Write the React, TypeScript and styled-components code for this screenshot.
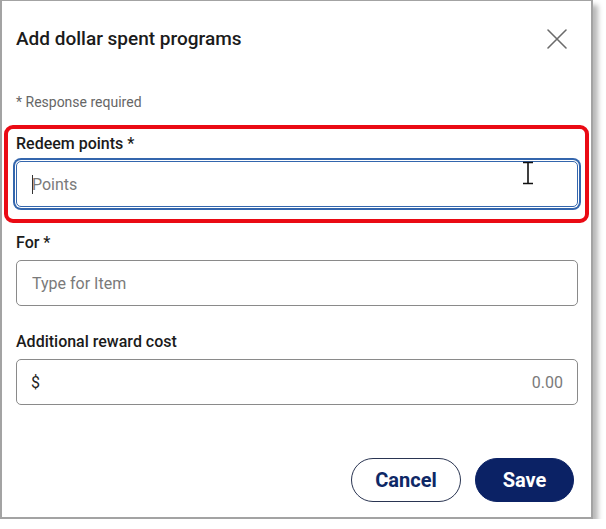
import React from "react";
import styled, { createGlobalStyle } from "styled-components";

const GlobalStyle = createGlobalStyle`
  html, body {
    margin: 0;
    padding: 0;
    background: #ffffff;
  }
  body {
    font-family: Roboto, "Liberation Sans", Arial, sans-serif;
    color: #1b1b1b;
  }
  * { box-sizing: border-box; }
`;

const Frame = styled.div`
  width: 593px;
  height: 519px;
  border: 2px solid #a3a3a3;
  border-top-width: 1px;
  background: #ffffff;
  box-shadow: 5px 5px 5px rgba(0, 0, 0, 0.28);
  display: flex;
  flex-direction: column;
`;

const Header = styled.div`
  display: flex;
  align-items: center;
  justify-content: space-between;
  padding: 26px 23px 0 14px;
  height: 50px;
`;

const Title = styled.h2`
  margin: 0;
  font-size: 19px;
  font-weight: 500;
  line-height: 24px;
  color: #1b1b1b;
`;

const CloseButton = styled.button`
  width: 22px;
  height: 22px;
  padding: 0;
  border: none;
  background: transparent;
  display: flex;
  align-items: center;
  justify-content: center;
  color: #6b6b6b;
  cursor: pointer;
`;

const Body = styled.div`
  display: flex;
  flex-direction: column;
  padding: 41px 13px 0 14px;
`;

const Note = styled.div`
  font-size: 14px;
  line-height: 20px;
  color: #666666;
  margin-bottom: 22px;
`;

const Field = styled.div<{ $highlight?: boolean }>`
  position: relative;
  display: flex;
  flex-direction: column;
  gap: 7px;
  margin-bottom: 26px;

  ${({ $highlight }) =>
    $highlight &&
    `
    &::before {
      content: "";
      position: absolute;
      left: -12px;
      right: -11px;
      top: -9px;
      bottom: -16px;
      border: 4px solid #ea0a14;
      border-radius: 9px;
      pointer-events: none;
    }
  `}
`;

const Label = styled.label`
  font-size: 16px;
  font-weight: 500;
  line-height: 20px;
  color: #1b1b1b;
`;

const InputShell = styled.div<{ $focused?: boolean }>`
  position: relative;
  height: 46px;
  border: 1px solid ${({ $focused }) => ($focused ? "#3466ad" : "#8a8a8a")};
  border-radius: 5px;
  display: flex;
  align-items: center;
  padding: 0 14px 0 15px;
  background: #ffffff;
  box-shadow: ${({ $focused }) =>
    $focused ? "0 0 0 1px #ffffff, 0 0 0 3px #3466ad" : "none"};
`;

const TextInput = styled.input<{ $align?: "left" | "right" }>`
  flex: 1;
  min-width: 0;
  border: none;
  outline: none;
  background: transparent;
  font-family: Roboto, "Liberation Sans", Arial, sans-serif;
  font-size: 16px;
  color: #1b1b1b;
  padding: 0;
  text-align: ${({ $align }) => $align ?? "left"};

  &::placeholder {
    color: #7a7a7a;
    opacity: 1;
  }
`;

const Prefix = styled.span`
  font-size: 16px;
  color: #222222;
  margin-right: 8px;
  margin-left: -1px;
`;

const Caret = styled.span`
  position: absolute;
  left: 15px;
  top: 13px;
  width: 1px;
  height: 19px;
  background: #333333;
`;

const Pointer = styled.svg`
  position: absolute;
  right: 42px;
  top: -1px;
  pointer-events: none;
`;

const Footer = styled.div`
  margin-top: auto;
  display: flex;
  justify-content: flex-end;
  gap: 14px;
  padding: 0 17px 15px 14px;
`;

const Button = styled.button<{ $primary?: boolean }>`
  height: 44px;
  border-radius: 22px;
  font-family: Roboto, "Liberation Sans", Arial, sans-serif;
  font-size: 20px;
  font-weight: 700;
  padding: 0;
  width: ${({ $primary }) => ($primary ? "99px" : "110px")};
  cursor: pointer;
  color: ${({ $primary }) => ($primary ? "#ffffff" : "#0e2866")};
  background: ${({ $primary }) => ($primary ? "#0b2265" : "#ffffff")};
  border: 1px solid ${({ $primary }) => ($primary ? "#0b2265" : "#2a3552")};
`;

export default function App() {
  return (
    <>
      <GlobalStyle />
      <Frame>
        <Header>
          <Title>Add dollar spent programs</Title>
          <CloseButton aria-label="Close">
            <svg width="22" height="22" viewBox="0 0 22 22">
              <path
                d="M2 2 L20 20 M20 2 L2 20"
                stroke="currentColor"
                strokeWidth="1.6"
                strokeLinecap="round"
              />
            </svg>
          </CloseButton>
        </Header>
        <Body>
          <Note>* Response required</Note>

          <Field $highlight>
            <Label>Redeem points *</Label>
            <InputShell $focused>
              <TextInput placeholder="Points" />
              <Caret />
              <Pointer width="14" height="24" viewBox="0 0 14 24">
                <path
                  d="M2 1.5 H12 M7 1.5 V22.5 M2 22.5 H12"
                  stroke="#111111"
                  strokeWidth="1.6"
                  fill="none"
                />
              </Pointer>
            </InputShell>
          </Field>

          <Field>
            <Label>For *</Label>
            <InputShell>
              <TextInput placeholder="Type for Item" />
            </InputShell>
          </Field>

          <Field>
            <Label>Additional reward cost</Label>
            <InputShell>
              <Prefix>$</Prefix>
              <TextInput $align="right" placeholder="0.00" />
            </InputShell>
          </Field>
        </Body>
        <Footer>
          <Button>Cancel</Button>
          <Button $primary>Save</Button>
        </Footer>
      </Frame>
    </>
  );
}
